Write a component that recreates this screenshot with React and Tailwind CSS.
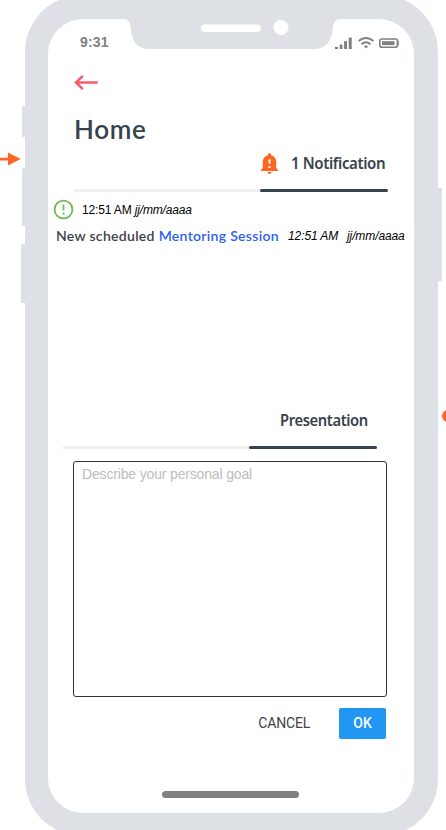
function SideButtons() {
  return (
    <>
      <span className="absolute left-[21.5px] top-[106px] h-[31px] w-[4px] rounded-l-[1px] bg-[#dde1e6]" />
      <span className="absolute left-[21.5px] top-[168px] h-[58px] w-[4px] rounded-l-[1px] bg-[#dde1e6]" />
      <span className="absolute left-[20.5px] top-[244px] h-[59px] w-[5px] rounded-l-[1px] bg-[#dde1e6]" />
      <span className="absolute left-[437px] top-[188px] h-[93px] w-[5px] rounded-r-[1px] bg-[#dde1e6]" />
    </>
  );
}

function Notch() {
  return (
    <svg className="absolute left-[75px] top-0" width="218" height="30" viewBox="0 0 218 30">
      <path d="M0 0C5 0 7 3 7.500 8C8.500 22 14 30 26 30H191C203 30 209 22 210 8C210.500 3 213 0 218 0Z" fill="#dde1e6" />
      <rect x="78" y="5.500" width="60" height="7.500" rx="3.750" fill="#fff" />
      <circle cx="158" cy="8.500" r="7.500" fill="#fff" />
    </svg>
  );
}

function StatusIcons() {
  return (
    <svg width="64" height="12" viewBox="0 0 64 12" fill="#808080">
      <path d="M0 10h3v2H0zM4.700 7.500h2.800V12H4.700zM9.100 4h2.900v8H9.100zM13.700 0.500h3V12h-3z" />
      <path d="M23.700 4C28 -0.100 34 -0.100 38.300 4M26.600 7.200C29.300 4.700 32.700 4.700 35.400 7.200" fill="none" stroke="#808080" strokeWidth="1.900" />
      <path d="M28.800 9.200Q31 7.600 33.200 9.200L31 11.600Z" />
      <rect x="44.800" y="2" width="17.600" height="8.300" rx="2" fill="none" stroke="#808080" strokeWidth="1.600" />
      <rect x="47" y="4.200" width="12.500" height="3.900" />
      <rect x="62.300" y="4" width="1.500" height="4.300" rx="0.600" />
    </svg>
  );
}

function BellIcon() {
  return (
    <svg width="17" height="21" viewBox="0 0 17 21" fill="#ff6523">
      <path fillRule="evenodd" d="M7 1.500a1.500 1.500 0 0 1 3 0V2.300C13.500 3 15.200 5.700 15.200 9V15L17 16.700V18H0V16.700L1.800 15V9C1.800 5.700 3.500 3 7 2.300ZM7.500 6.200V10.800H9.500V6.200ZM7.500 13V15H9.500V13ZM6.500 19H10.500A2 2 0 0 1 6.500 19Z" />
    </svg>
  );
}

function Rule() {
  return (
    <div className="flex h-[3px] items-center">
      <span className="h-[3px] w-[186px] bg-[#f0f0f1]" />
      <span className="h-[3px] w-[128px] rounded-full bg-[#37424c]" />
    </div>
  );
}

export default function App() {
  return (
    <div className="relative flex h-[830px] w-[446px] overflow-hidden bg-white pl-[25px] font-['Liberation_Sans',sans-serif]">
      <SideButtons />
      <main className="-mt-[5px] h-[841px] w-[413px] shrink-0 rounded-[57px] bg-[#dde1e6] pl-[23px] pt-[24px]">
        <div className="relative flex h-[794px] w-[366px] flex-col rounded-[35px] bg-white">
          <Notch />
          <div className="flex h-[46px] items-start justify-between pl-[32px] pr-[15px] pt-[14px]">
            <span className="text-[14px] font-bold leading-[18px] tracking-[0.2px] text-[#808080]">9:31</span>
            <span className="pt-[4px]"><StatusIcons /></span>
          </div>
          <svg className="mt-[9px] ml-[26px]" width="24" height="17" viewBox="0 0 24 17" fill="none" stroke="#fa5b68" strokeWidth="2.500">
            <path d="M23.700 8.500H2M8.800 1.800L2 8.500L8.800 15.200" />
          </svg>
          <h1 className="mt-[21px] h-[34px] pl-[26px] font-['Lato',sans-serif] text-[26px] font-semibold leading-[34px] tracking-[0.7px] text-[#37424c]">Home</h1>
          <div className="mt-[4px] flex h-[26px] items-center pl-[213px]">
            <BellIcon />
            <span className="ml-[13px] origin-left scale-x-[0.94] whitespace-nowrap font-['Noto_Sans',sans-serif] text-[16px] font-semibold leading-[24px] tracking-[-0.4px] text-[#37424c]">1 Notification</span>
          </div>
          <div className="mt-[13px] pl-[26px]"><Rule /></div>
          <div className="mt-[6px] flex h-[22px] items-center pl-[5px] text-[12px] text-black">
            <svg width="21" height="21" viewBox="0 0 21 21" fill="none" stroke="#6fb954" strokeWidth="1.800">
              <circle cx="10.500" cy="10.500" r="8.900" />
              <path d="M10.500 5.500V11.500M10.500 13.500V15.500" />
            </svg>
            <span className="ml-[8px] mt-[1px] whitespace-nowrap tracking-[-0.15px]">12:51 AM <i>jj/mm/aaaa</i></span>
          </div>
          <div className="mt-[5px] flex h-[20px] items-center whitespace-nowrap pl-[8px] text-[12px]">
            <span className="mt-[1px] w-[232px] font-['Lato',sans-serif] text-[14px] font-semibold tracking-[0.31px] text-[#3b424a]">New scheduled <a className="text-[#2d5ff0]">Mentoring Session</a></span>
            <i className="mt-[1px] w-[59px] tracking-[-0.1px] text-black">12:51 AM</i>
            <i className="mt-[1px] tracking-[-0.1px] text-black">jj/mm/aaaa</i>
          </div>
          <h2 className="mt-[163px] h-[24px] origin-[232px_0] scale-x-[0.92] pl-[232px] font-['Noto_Sans',sans-serif] text-[16px] font-semibold leading-[24px] tracking-[-0.4px] text-[#37424c]">Presentation</h2>
          <div className="mt-[14px] pl-[15.400px]"><Rule /></div>
          <textarea aria-label="Personal goal" placeholder="Describe your personal goal" className="ml-[25px] mt-[12px] h-[236px] w-[314px] shrink-0 resize-none rounded-[3px] border border-[#333] px-[8px] py-[4px] text-[14px] leading-[17px] tracking-[-0.16px] placeholder:text-[#bdbdbd]" />
          <div className="mt-[11px] flex h-[31px] items-center justify-end pr-[28px] font-['Roboto',sans-serif] text-[14px]">
            <button className="mr-[29px] tracking-[-0.2px] text-[#424242]">CANCEL</button>
            <button className="h-[31px] w-[47px] rounded-[2px] bg-[#2196f3] font-medium text-white">OK</button>
          </div>
          <div className="ml-[114px] mt-[52px] h-[7px] w-[137px] shrink-0 rounded-full bg-[#808080]" />
        </div>
      </main>
      <svg className="absolute left-0 top-[152px]" width="21" height="14" viewBox="0 0 21 14" fill="#ff6523">
        <path d="M0 5.800H8V0.500L20.700 7L8 13.500V8.500H0Z" />
      </svg>
      <span className="absolute left-[442px] top-[410px] h-[12px] w-[12px] rounded-full bg-[#ff6523]" />
    </div>
  );
}
